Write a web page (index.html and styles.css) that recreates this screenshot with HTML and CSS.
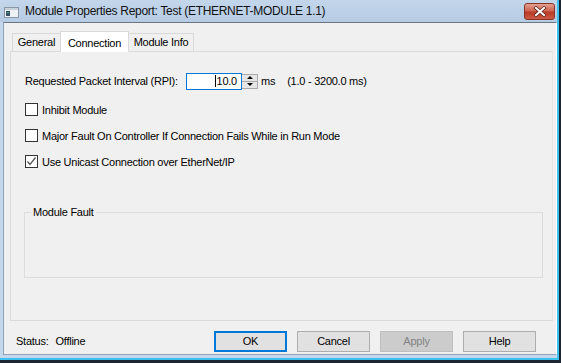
FILE: index.html
```html
<!DOCTYPE html>
<html lang="en">
<head>
  <meta charset="UTF-8" />
  <title>Module Properties Report: Test (ETHERNET-MODULE 1.1)</title>
  <link rel="stylesheet" href="styles.css">
</head>
<body>
  <div class="window">
    <div class="titlebar">
      <svg class="app-icon" width="15" height="11" viewBox="0 0 15 11">
        <rect x="0.5" y="0.5" width="14" height="10" fill="#eef2f5" stroke="#8a98a6"/>
        <rect x="1" y="1" width="13" height="2" fill="#c9d3dc"/>
        <rect x="2" y="4" width="4" height="5" fill="#3b5266"/>
        <rect x="3" y="5" width="2" height="1" fill="#3fae7c"/>
      </svg>
      <span class="title">Module Properties Report: Test (ETHERNET-MODULE 1.1)</span>
      <div class="close-btn">
        <svg width="14" height="11" viewBox="0 0 14 11">
          <path d="M3 2 L11 9 M11 2 L3 9" stroke="#5a1d14" stroke-width="3.4" stroke-linecap="square"/>
          <path d="M3 2 L11 9 M11 2 L3 9" stroke="#fff" stroke-width="2" stroke-linecap="square"/>
        </svg>
      </div>
    </div>

    <div class="frame">
      <div class="client">
        <div class="tabs">
          <div class="tab tab-general">General</div>
          <div class="tab tab-connection active">Connection</div>
          <div class="tab tab-info">Module Info</div>
        </div>

        <div class="tab-page">
          <div class="rpi-row">
            <span class="rpi-label">Requested Packet Interval (RPI):</span>
            <div class="num-box"><span class="caret"></span>10.0</div>
            <div class="spinner">
              <div class="spin-btn"><span class="arrow-up"></span></div>
              <div class="spin-btn"><span class="arrow-down"></span></div>
            </div>
            <span class="unit">ms</span>
            <span class="range">(1.0 - 3200.0 ms)</span>
          </div>

          <div class="check">
            <span class="box"></span>
            <span>Inhibit Module</span>
          </div>
          <div class="check">
            <span class="box"></span>
            <span>Major Fault On Controller If Connection Fails While in Run Mode</span>
          </div>
          <div class="check">
            <span class="box checked">
              <svg width="11" height="11" viewBox="0 0 11 11">
                <path d="M1.5 5.5 L4 8.5 L9.5 1.5" fill="none" stroke="#555" stroke-width="1.3"/>
              </svg>
            </span>
            <span>Use Unicast Connection over EtherNet/IP</span>
          </div>

          <fieldset class="group">
            <legend>Module Fault</legend>
          </fieldset>
        </div>

        <div class="footer">
          <span class="status">Status:</span>
          <span class="status-value">Offline</span>
          <div class="buttons">
            <button class="btn default">OK</button>
            <button class="btn">Cancel</button>
            <button class="btn" disabled>Apply</button>
            <button class="btn">Help</button>
          </div>
        </div>
      </div>
    </div>
  </div>
</body>
</html>
```

FILE: styles.css
```css
body {
  margin: 0;
  background: #1c2633;
  font-family: "Liberation Sans", Arial, sans-serif;
  font-size: 11px;
  letter-spacing: -0.25px;
  color: #000;
}

.window {
  width: 557px;
  height: 358px;
  display: flex;
  flex-direction: column;
  border-right: 2px solid #3cc2f0;
  border-bottom: 2px solid #3cc2f0;
  background: #c4d7ec;
  overflow: hidden;
}

/* title bar */
.titlebar {
  height: 22px;
  display: flex;
  align-items: flex-start;
  background: linear-gradient(#c3d6eb, #b6cce4);
}

.app-icon {
  margin: 7px 6px 0 4px;
}

.title {
  flex: 1;
  margin-top: 4px;
  font-size: 12px;
  letter-spacing: -0.3px;
  color: #111;
}

.close-btn {
  width: 29px;
  height: 15px;
  margin: 3px 2px 0 0;
  display: flex;
  align-items: center;
  justify-content: center;
  border: 1px solid #8a3427;
  border-radius: 3px;
  background: linear-gradient(#e3a194, #cf6450 45%, #b83b27 55%, #cc5a44);
}

/* frame + client */
.frame {
  flex: 1;
  display: flex;
  border-left: 3px solid #c4d7ec;
  border-bottom: 3px solid #c4d7ec;
}

.client {
  flex: 1;
  display: flex;
  flex-direction: column;
  padding: 8px 3px 0 6px;
  background: #f0f0f0;
  border: 1px solid #8ea2b8;
  border-top-color: #6c7580;
  border-right-color: #fff;
}

/* tabs */
.tabs {
  height: 20px;
  display: flex;
  align-items: flex-end;
  padding-left: 2px;
}

.tab {
  height: 17px;
  line-height: 17px;
  text-align: center;
  background: #f0f0f0;
  border: 1px solid #d9d9d9;
  border-bottom: none;
}

.tab-general { width: 47px; }
.tab-connection { width: 67px; }
.tab-info { width: 64px; border-left: none; }

.tab.active {
  position: relative;
  height: 20px;
  line-height: 22px;
  margin-bottom: -1px;
  margin-left: -1px;
  background: #fff;
  border-color: #d9d9d9;
}

.tab-page {
  flex: 1;
  border: 1px solid #d9d9d9;
  border-right-color: #e6e6e6;
  padding: 21px 0 0 14px;
}

/* RPI row */
.rpi-row {
  height: 16px;
  display: flex;
  align-items: center;
}

.rpi-label {
  width: 161px;
}

.num-box {
  width: 50px;
  height: 15px;
  line-height: 15px;
  padding-right: 4px;
  text-align: right;
  background: #fff;
  border: 1px solid #0078d7;
}

.caret {
  display: inline-block;
  width: 1px;
  height: 12px;
  margin-right: 1px;
  vertical-align: -2px;
  background: #000;
}

.spinner {
  width: 15px;
  height: 13px;
  display: flex;
  flex-direction: column;
  border: 1px solid #a9a9a9;
  border-left: none;
  background: #e6e6e6;
}

.spin-btn {
  flex: 1;
  display: flex;
  align-items: center;
  justify-content: center;
}

.spin-btn + .spin-btn {
  border-top: 1px solid #a9a9a9;
}

.arrow-up, .arrow-down {
  width: 0;
  height: 0;
  border-left: 3px solid transparent;
  border-right: 3px solid transparent;
}

.arrow-up { border-bottom: 3px solid #000; }
.arrow-down { border-top: 3px solid #000; }

.unit { margin-left: 3px; }
.range { margin-left: 12px; }

/* checkboxes */
.check {
  height: 13px;
  margin-top: 14px;
  display: flex;
  align-items: center;
  gap: 4px;
}

.check:first-of-type { margin-top: 15px; }
.check + .check { margin-top: 13px; }

.box {
  width: 11px;
  height: 11px;
  display: flex;
  border: 1px solid #333;
  background: #fff;
}

/* group box */
.group {
  height: 72px;
  box-sizing: border-box;
  margin: 38px 9px 0 -1px;
  padding: 0;
  border: 1px solid #dcdcdc;
}

.group legend {
  margin-left: 6px;
  padding: 0 2px;
  line-height: 13px;
}

/* footer */
.footer {
  height: 33px;
  box-sizing: border-box;
  padding: 7px 17px 0 6px;
  display: flex;
  align-items: center;
}

.status-value { margin-left: 7px; }

.buttons {
  margin-left: auto;
  display: flex;
  gap: 10px;
}

.btn {
  width: 73px;
  height: 21px;
  padding: 0;
  font-family: "Liberation Sans", Arial, sans-serif;
  font-size: 11px;
  letter-spacing: -0.25px;
  color: #000;
  background: #e1e1e1;
  border: 1px solid #adadad;
}

.btn.default {
  border: 2px solid #0078d7;
}

.btn:disabled {
  color: #838383;
  background: #cccccc;
  border-color: #bfbfbf;
}
```
